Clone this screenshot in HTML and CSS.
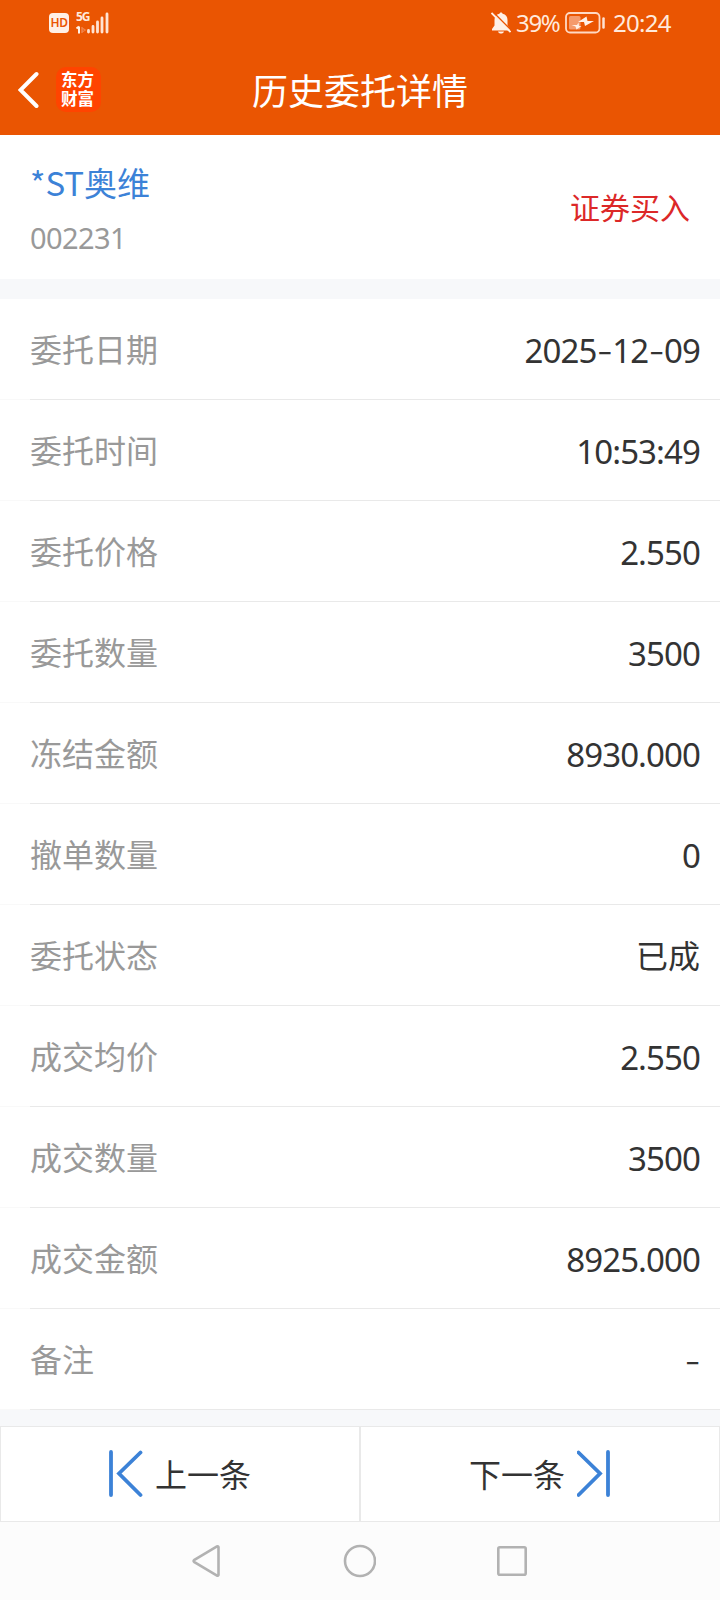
FILE: index.html
```html
<!DOCTYPE html>
<html lang="zh-CN">
<head>
  <meta charset="UTF-8" />
  <meta name="viewport" content="width=device-width, initial-scale=1.0"/>
  <title>历史委托详情</title>
  <link rel="stylesheet" href="styles.css">
</head>
<body>

  <header class="header">
    <div class="status-bar">
      <div class="status-left">
        <span class="hd">HD</span>
        <div class="network">
          <span class="net-type">5G</span>
          <svg class="signal" width="34" height="22" viewBox="0 0 34 22">
            <path d="M4 14.5v7M1.500 16.500l2.500-2" stroke="#fff0e6" stroke-width="2" fill="none"/>
            <path d="M7 15v6M7 16l3 2-3 2" stroke="#f0834a" stroke-width="1.500" fill="none"/>
            <path d="M13.500 18.500v1.500M18 14.500v5.500M22.500 10v10M27 6v14M32 2v18" stroke="#ffe3d3" stroke-width="2.800" stroke-linecap="round"/>
          </svg>
        </div>
      </div>
      <div class="status-right">
        <svg class="bell" width="20" height="22" viewBox="0 0 20 22">
          <path d="M10 0.500c-1 0-1.500.6-1.500 1.300C5 2.500 3.500 5 3.500 8v5.500L1 17v1.500h18V17l-2.500-3.500V8c0-3-1.500-5.500-5-6.200 0-.7-.5-1.300-1.500-1.300zM7 19.500c.5 1.500 1.500 2 3 2s2.500-.5 3-2z" fill="#fff0e6"/>
          <path d="M2 0L21 19" stroke="#eb5502" stroke-width="1.500"/>
          <path d="M0.500 1L19.500 20" stroke="#fff0e6" stroke-width="1.800"/>
        </svg>
        <span class="percent">39%</span>
        <svg class="battery" width="41" height="22" viewBox="0 0 41 22">
          <rect x="1" y="1" width="33.500" height="19.500" rx="4" fill="none" stroke="#ffd9c4" stroke-width="1.800"/>
          <rect x="4" y="4" width="11.500" height="13.500" rx="1.500" fill="#f59a6c"/>
          <path d="M21.500 4.500L13 10h6l1 4 9-5h-6.500zM13.500 10.500L12 13H6.500l4 1.500 1 3 5-3.500h-2.500z" fill="#fff0e6"/>
          <path d="M38.500 6.500v9" stroke="#ffe3d3" stroke-width="2.500" stroke-linecap="round"/>
        </svg>
        <span class="clock">20:24</span>
      </div>
    </div>
    <div class="title-bar">
      <div class="nav-left">
        <svg class="back" width="22" height="38" viewBox="0 0 22 38">
          <path d="M18.500 3L2.500 19l16 16" fill="none" stroke="#fff" stroke-width="4" stroke-linecap="round"/>
        </svg>
        <div class="app-logo">东方财富</div>
      </div>
      <h1>历史委托详情</h1>
    </div>
  </header>

  <section class="stock">
    <div>
      <div class="stock-name">*ST奥维</div>
      <div class="stock-code">002231</div>
    </div>
    <div class="trade-type">证券买入</div>
  </section>

  <ul class="details">
    <li><span class="label">委托日期</span><span class="value">2025<i>-</i>12<i>-</i>09</span></li>
    <li><span class="label">委托时间</span><span class="value">10:53:49</span></li>
    <li><span class="label">委托价格</span><span class="value">2.550</span></li>
    <li><span class="label">委托数量</span><span class="value">3500</span></li>
    <li><span class="label">冻结金额</span><span class="value">8930.000</span></li>
    <li><span class="label">撤单数量</span><span class="value">0</span></li>
    <li><span class="label">委托状态</span><span class="value text">已成</span></li>
    <li><span class="label">成交均价</span><span class="value">2.550</span></li>
    <li><span class="label">成交数量</span><span class="value">3500</span></li>
    <li><span class="label">成交金额</span><span class="value">8925.000</span></li>
    <li><span class="label">备注</span><span class="value"><i>-</i></span></li>
  </ul>

  <div class="pager">
    <button>
      <svg width="34" height="48" viewBox="0 0 34 48">
        <path d="M2 2v43M31.500 2.500L10 23.500l21.500 21.500" fill="none" stroke="#3c82d7" stroke-width="3.800" stroke-linecap="round"/>
      </svg>
      <span>上一条</span>
    </button>
    <button>
      <span>下一条</span>
      <svg width="34" height="48" viewBox="0 0 34 48">
        <path d="M31 2v43M1.500 2.500L23 23.500l-21.500 21.500" fill="none" stroke="#3c82d7" stroke-width="3.800" stroke-linecap="round"/>
      </svg>
    </button>
  </div>

  <footer class="system-nav">
    <svg width="30" height="34" viewBox="0 0 30 34">
      <path d="M27.500 3.200v27.600a1 1 0 0 1-1.500.8L3 17.800a1 1 0 0 1 0-1.600L26 2.400a1 1 0 0 1 1.500.8z" fill="none" stroke="#b2b2b2" stroke-width="2.600"/>
    </svg>
    <svg width="34" height="34" viewBox="0 0 34 34">
      <circle cx="18" cy="17" r="15" fill="none" stroke="#b2b2b2" stroke-width="2.600"/>
    </svg>
    <svg width="30" height="30" viewBox="0 0 30 30">
      <rect x="1.300" y="1.300" width="27.400" height="27.400" rx="1.500" fill="none" stroke="#b2b2b2" stroke-width="2.600"/>
    </svg>
  </footer>

</body>
</html>
```

FILE: styles.css
```css
* {
  box-sizing: border-box;
}
body {
  margin: 0;
  width: 720px;
  height: 1600px;
  display: flex;
  flex-direction: column;
  background: #f7f8fa;
  font-family: "Noto Sans CJK SC", sans-serif;
  overflow: hidden;
}
svg {
  display: block;
  flex: none;
}
.header {
  height: 135px;
  background: #ea5502;
  color: #fff;
}
.status-bar {
  height: 46px;
  padding: 0 47px 0 49px;
  display: flex;
  justify-content: space-between;
  align-items: center;
  color: #ffe9dc;
  font-family: "Noto Sans", sans-serif;
}
.status-left, .status-right {
  display: flex;
  align-items: center;
}
.hd {
  width: 20px;
  height: 20px;
  border-radius: 4px;
  background: #fff0e6;
  color: #eb5502;
  font-size: 12px;
  font-weight: 600;
  line-height: 20px;
  letter-spacing: -0.5px;
  text-align: center;
}
.network {
  position: relative;
  margin-left: 6px;
}
.net-type {
  position: absolute;
  left: 1px;
  top: -1px;
  font-family: "Open Sans", sans-serif;
  font-size: 12px;
  font-weight: bold;
  line-height: 12px;
  letter-spacing: -1px;
}
.percent, .clock {
  font-size: 24px;
  line-height: 46px;
}
.percent {
  width: 53px;
  padding-left: 4px;
  letter-spacing: -1.3px;
}
.bell {
  margin-right: 1px;
}
.clock {
  width: 60px;
  margin-left: 7px;
  letter-spacing: -0.7px;
}
.title-bar {
  position: relative;
  height: 86px;
  display: flex;
  justify-content: center;
  align-items: center;
}
.nav-left {
  position: absolute;
  left: 18px;
  top: 21px;
  display: flex;
  align-items: center;
  gap: 16px;
}
.app-logo {
  width: 45px;
  height: 45px;
  padding: 3px 5px 0 5px;
  border-radius: 10px;
  background: #ff4400;
  font-size: 16.5px;
  font-weight: bold;
  line-height: 19px;
}
h1 {
  margin: 0;
  font-size: 36px;
  font-weight: normal;
  line-height: 86px;
}
.stock {
  height: 144px;
  padding: 2px 30px 0;
  display: flex;
  justify-content: space-between;
  align-items: center;
  background: #fff;
}
.stock-name {
  padding-top: 8px;
  color: #3c82d7;
  font-size: 33px;
  line-height: 50px;
}
.stock-code {
  padding-top: 1px;
  color: #999;
  font-family: "Noto Sans", sans-serif;
  font-size: 29px;
  line-height: 60px;
  letter-spacing: -0.6px;
}
.trade-type {
  padding-bottom: 4px;
  color: #dc2828;
  font-size: 30px;
}
.details {
  margin: 20px 0 16px;
  padding: 0;
  list-style: none;
  background: #fff;
}
.details li {
  height: 101px;
  padding: 0 20px 0 30px;
  display: flex;
  justify-content: space-between;
  background: linear-gradient(to right, #f9f9f9 30px, #e9e9e9 30px) bottom / 100% 1px no-repeat;
  font-size: 32px;
  line-height: 99px;
}
.label {
  color: #999;
}
.value {
  color: #333;
  font-family: "Noto Sans", sans-serif;
  font-size: 33px;
  line-height: 103px;
  letter-spacing: -0.9px;
}
.value.text {
  font-family: "Noto Sans CJK SC", sans-serif;
  font-size: 32px;
  line-height: 99px;
  letter-spacing: 0;
}
.value i {
  font-family: Inter, sans-serif;
  font-size: 37px;
  font-style: normal;
  font-weight: 300;
  line-height: 1;
  vertical-align: -2px;
}
.pager {
  height: 96px;
  display: flex;
}
.pager button {
  flex: 1;
  display: flex;
  justify-content: center;
  align-items: center;
  gap: 12px;
  padding: 0;
  border: 1px solid #e9e9e9;
  background: #fff;
  color: #333;
  font-family: inherit;
  font-size: 32px;
}
.pager span {
  padding-bottom: 2px;
}
.system-nav {
  flex: 1;
  padding-right: 2px;
  display: flex;
  justify-content: center;
  align-items: center;
  gap: 121px;
  background: #fcfcfc;
}
```
